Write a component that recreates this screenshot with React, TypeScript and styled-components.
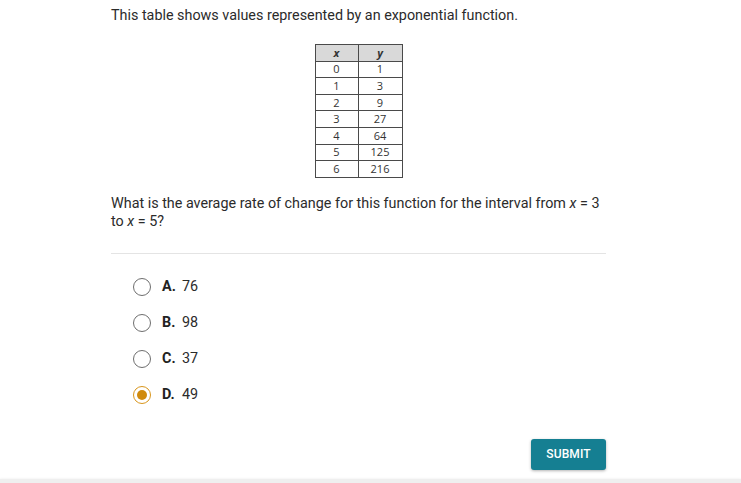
import React from "react";
import styled, { createGlobalStyle } from "styled-components";

const Global = createGlobalStyle`
  html, body { margin: 0; padding: 0; background: #fff; }
  body { font-family: Roboto, "Liberation Sans", sans-serif; color: #2b2b2b; }
`;

const Page = styled.div`
  height: 483px;
  display: flex;
  flex-direction: column;
  overflow: hidden;
`;

const Content = styled.div`
  flex: 1;
  width: 495px;
  margin-left: 111px;
  padding-top: 7px;
  display: flex;
  flex-direction: column;
`;

const Para = styled.p`
  margin: 0;
  font-size: 14.35px;
  line-height: 18px;
  color: #2b2b2b;
`;

const TableWrap = styled.div`
  display: flex;
  justify-content: center;
  margin: 19px 0 17px;
`;

const DataTable = styled.table`
  border-collapse: collapse;
  font-family: "Open Sans", "Noto Sans", sans-serif;
  font-size: 11px;
  color: #333;
  border: 1px solid #4a4a4a;
`;

const Cell = styled.td<{ $head?: boolean; $w: number }>`
  width: ${(p) => p.$w}px;
  height: 15.6px;
  padding: 0;
  text-align: center;
  line-height: 14px;
  border: 1px solid #4a4a4a;
  background: ${(p) => (p.$head ? "#d9d9d9" : "#fff")};
  font-weight: ${(p) => (p.$head ? 700 : 400)};
  font-style: ${(p) => (p.$head ? "italic" : "normal")};
`;

const Divider = styled.hr`
  border: 0;
  border-top: 1px solid #e4e4e4;
  margin: 22px 0 15px;
`;

const Options = styled.div`
  display: flex;
  flex-direction: column;
  padding-left: 22px;
`;

const Option = styled.label`
  display: flex;
  align-items: center;
  height: 36px;
  font-size: 14.35px;
  color: #2b2b2b;
  cursor: pointer;
`;

const Radio = styled.span<{ $checked?: boolean }>`
  box-sizing: border-box;
  width: 18px;
  height: 18px;
  border-radius: 50%;
  border: 1px solid ${(p) => (p.$checked ? "#d9961c" : "#6e6e6e")};
  display: flex;
  align-items: center;
  justify-content: center;
  margin-right: 11px;
  &::after {
    content: "";
    width: 10px;
    height: 10px;
    border-radius: 50%;
    background: ${(p) => (p.$checked ? "#d08a0c" : "transparent")};
  }
`;

const Letter = styled.span`
  font-weight: 700;
  color: #222;
  width: 20px;
`;

const Actions = styled.div`
  display: flex;
  justify-content: flex-end;
  margin-top: 26px;
`;

const SubmitButton = styled.button`
  width: 75px;
  height: 31px;
  border: 0;
  border-radius: 3px;
  background: #157f92;
  color: #fff;
  font-family: Roboto, "Liberation Sans", sans-serif;
  font-size: 12px;
  font-weight: 500;
  letter-spacing: 0.1px;
  box-shadow: 0 1px 3px rgba(0, 0, 0, 0.3);
  cursor: pointer;
`;

const Footer = styled.div`
  height: 4px;
  background: #efefef;
  box-shadow: 0 -1px 2px rgba(0, 0, 0, 0.04);
`;

const rows: [number, number][] = [
  [0, 1],
  [1, 3],
  [2, 9],
  [3, 27],
  [4, 64],
  [5, 125],
  [6, 216],
];

const choices = [
  { l: "A.", v: "76" },
  { l: "B.", v: "98" },
  { l: "C.", v: "37" },
  { l: "D.", v: "49", checked: true },
];

export default function App() {
  return (
    <Page>
      <Global />
      <Content>
        <Para>This table shows values represented by an exponential function.</Para>
        <TableWrap>
          <DataTable>
            <tbody>
              <tr>
                <Cell $head $w={42}>x</Cell>
                <Cell $head $w={43}>y</Cell>
              </tr>
              {rows.map(([x, y]) => (
                <tr key={x}>
                  <Cell $w={42}>{x}</Cell>
                  <Cell $w={43}>{y}</Cell>
                </tr>
              ))}
            </tbody>
          </DataTable>
        </TableWrap>
        <Para>
          What is the average rate of change for this function for the interval from <i>x</i> = 3 to <i>x</i> = 5?
        </Para>
        <Divider />
        <Options>
          {choices.map((c) => (
            <Option key={c.l}>
              <Radio $checked={c.checked} />
              <Letter>{c.l}</Letter>
              <span>{c.v}</span>
            </Option>
          ))}
        </Options>
        <Actions>
          <SubmitButton>SUBMIT</SubmitButton>
        </Actions>
      </Content>
      <Footer />
    </Page>
  );
}
